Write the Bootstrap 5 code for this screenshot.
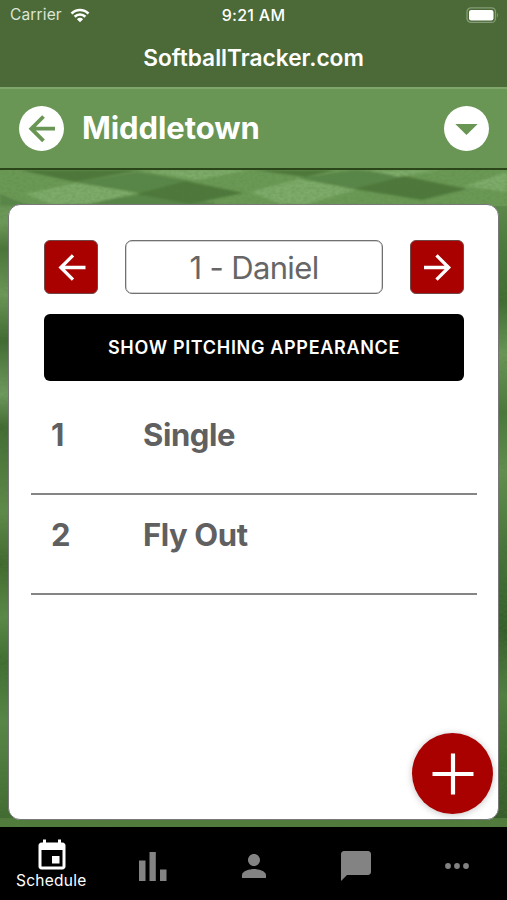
<!DOCTYPE html>
<html lang="en">
<head>
<meta charset="utf-8">
<meta name="viewport" content="width=device-width, initial-scale=1">
<title>SoftballTracker.com</title>
<link href="https://cdn.jsdelivr.net/npm/bootstrap@5.3.0/dist/css/bootstrap.min.css" rel="stylesheet">
<style>
body{font-family:Inter,"Liberation Sans",sans-serif;background:#000;color:#606060}
.phone{height:900px;width:100%}
.top-zone{background:#4b6a38;height:87px}
.status{height:30px;font-size:16px;padding:0 7px 0 10px;line-height:30px;color:#fff}
.status .carrier{color:#dce5d6;font-size:15.5px;letter-spacing:.15px}
.status .clock{font-weight:500;letter-spacing:.3px}
.brand{font-size:22.7px;font-weight:600;line-height:28px;margin-top:14px}
.team-bar{background:#699555;height:83px;border-top:2px solid #7fa76c;border-bottom:2px solid #2b4619;padding:0 18px 0 19px}
.team-name{font-size:31px;font-weight:700;line-height:40px;margin:-2px 0 0 18px;letter-spacing:-.08px}
.round{width:45px;height:45px;border:0;border-radius:50%;background:#fff}
.field{padding:34px 8px 7px}
.grass{position:absolute;inset:0;width:100%;height:100%}
.sheet{border:1px solid #777;border-radius:12px;padding:34px 21px 0 22px}
.picker{padding:1px 13px 0}
.step{width:54px;height:54px;background:#a90000;border:1px solid #704848;border-radius:6px}
.player{width:258px;height:54px;border:1px solid #707070;border-radius:7px;box-shadow:inset 0 0 0 .5px #aaa;font-size:31px;line-height:54px;color:#666;letter-spacing:-.65px}
.pitch{height:67px;margin:20px 13px 0;border-radius:6px;background:#000;color:#fff;font-size:18px;font-weight:600;letter-spacing:.68px}
.play{height:100px;border-bottom:2px solid #858585;padding:20px 20px 0;font-size:31px;font-weight:700;line-height:40px;color:#606060;letter-spacing:-.4px}
.play-no{width:92px}
.plays{margin-top:14px}
.fab{position:absolute;right:14px;top:563px;width:81px;height:81px;border:0;border-radius:50%;background:#a90000;box-shadow:0 1px 7px rgba(0,0,0,.24)}
.tabs{height:73px;background:#000;color:#808080}
.tab-item{width:20%;color:#838383;padding:5px 0 0 2px}
.tab-item.on{color:#fff;font-size:15.5px;line-height:20px;letter-spacing:.25px;padding-left:1px}
.tab-item.on svg{margin-top:6px;margin-bottom:-3px;margin-left:1px}
</style>
</head>
<body>
<div class="phone d-flex flex-column overflow-hidden">
  <header class="top-zone text-white">
    <div class="status d-flex justify-content-between align-items-center position-relative">
      <div class="d-flex align-items-center gap-2"><span class="carrier">Carrier</span>
        <svg width="20" height="15" viewBox="0 0 22 16" fill="none" stroke="#fff" stroke-width="2.9"><path d="M1.7 5.9a13 13 0 0 1 18.6 0M5.1 9.4a8.3 8.3 0 0 1 11.8 0"/><path d="M11 15.5 7.6 12a4.800 4.800 0 0 1 6.800 0z" fill="#fff" stroke="none"/></svg>
      </div>
      <span class="clock position-absolute start-50 translate-middle-x">9:21 AM</span>
      <svg width="34" height="17" viewBox="0 0 34 17"><rect x="1" y=".9" width="28.500" height="14.500" rx="4" fill="none" stroke="#869c77" stroke-width="1.300"/><rect x="3" y="2.900" width="24.500" height="10.500" rx="2.200" fill="#fff"/><path d="M31.200 6q1.900 2.200 0 4.400z" fill="#869c77"/></svg>
    </div>
    <div class="brand text-center">SoftballTracker.com</div>
  </header>
  <nav class="team-bar d-flex align-items-center text-white">
    <button class="round p-0 d-flex align-items-center justify-content-center" aria-label="Back"><svg width="45" height="45" viewBox="0 0 45 45" fill="none" stroke="#699555" stroke-width="3.800"><path d="M36 22.700H12M24.500 10.500 12.300 22.700l12.200 12.200"/></svg></button>
    <span class="team-name">Middletown</span>
    <button class="round p-0 ms-auto d-flex align-items-center justify-content-center" aria-label="Menu"><svg width="45" height="45" viewBox="0 0 45 45" fill="#699555"><path d="M11.300 18h22.400L22.500 29z"/></svg></button>
  </nav>
  <main class="field flex-grow-1 position-relative d-flex flex-column">
    <svg class="grass" viewBox="0 0 507 657" preserveAspectRatio="none">
      <defs>
        <filter id="soft"><feGaussianBlur stdDeviation="1"/></filter>
        <filter id="grain" x="0" y="0" width="100%" height="100%"><feTurbulence type="fractalNoise" baseFrequency=".25 .4" numOctaves="2" seed="4"/><feColorMatrix values="0 0 0 0 .1  0 0 0 0 .2  0 0 0 0 .05  .5 0 0 0 -.17"/></filter>
        <linearGradient id="left" x2="0" y2="1"><stop offset="0" stop-color="#5f8c4c"/><stop offset=".08" stop-color="#6d9a5a"/><stop offset=".12" stop-color="#4a753a"/><stop offset=".19" stop-color="#6c9859"/><stop offset=".26" stop-color="#3f6a31"/><stop offset=".34" stop-color="#6f9b60"/><stop offset=".39" stop-color="#416b32"/><stop offset=".52" stop-color="#5e8b4c"/><stop offset=".6" stop-color="#41692f"/><stop offset=".68" stop-color="#5a8a48"/><stop offset=".75" stop-color="#3f6d31"/><stop offset=".84" stop-color="#588749"/><stop offset="1" stop-color="#3d672e"/></linearGradient>
        <linearGradient id="right" x2="0" y2="1"><stop offset="0" stop-color="#6a9758"/><stop offset=".12" stop-color="#4a783c"/><stop offset=".2" stop-color="#3f6c32"/><stop offset=".28" stop-color="#6a9658"/><stop offset=".37" stop-color="#4a773b"/><stop offset=".46" stop-color="#618f4f"/><stop offset=".58" stop-color="#46723a"/><stop offset=".7" stop-color="#335d2a"/><stop offset=".8" stop-color="#537f43"/><stop offset=".9" stop-color="#3d692f"/><stop offset="1" stop-color="#34592a"/></linearGradient>
      </defs>
      <rect width="254" height="657" fill="url(#left)"/>
      <rect x="253" width="254" height="657" fill="url(#right)"/>
      <rect y="648" width="507" height="9" fill="#507b3d"/>
      <rect width="507" height="36" fill="#6a9955"/>
      <g filter="url(#soft)">
        <path fill="#598648" d="M76 12l62-10 50 9-48 12zM300 8l55-8 50 6-50 13zM0 24l30 12H0zM75 34l70-10 70 9v3H75z"/>
        <path fill="#4d783b" d="M20 0h120L75 12zM136 24l50-13 58 12-54 11zM255 0h80l-30 7zM354 19l50-13 63 13-45 11z"/>
        <path fill="#7dab69" d="M25 24l50-11 62 10-48 11H50zM140 0h110l-53 10zM250 22l49-13 57 11-50 14h-25zM370 0h70l-42 7zM464 16l43-14v20z"/>
      </g>
      <rect width="507" height="657" filter="url(#grain)"/>
    </svg>
    <section class="sheet bg-white flex-grow-1 position-relative">
      <div class="picker d-flex justify-content-between">
        <button class="step p-0 d-flex align-items-center justify-content-center" aria-label="Previous"><svg width="32" height="32" viewBox="0 0 32 32" fill="none" stroke="#fff" stroke-width="3.300"><path d="M30.500 16.500H5.500M18 4.300 5.800 16.500 18 28.700"/></svg></button>
        <div class="player text-center">1 - Daniel</div>
        <button class="step p-0 d-flex align-items-center justify-content-center" aria-label="Next"><svg width="32" height="32" viewBox="0 0 32 32" fill="none" stroke="#fff" stroke-width="3.300"><path d="M3 16.500h25M15.500 4.300 27.700 16.500 15.500 28.700"/></svg></button>
      </div>
      <div class="d-grid"><button class="pitch border-0 p-0">SHOW PITCHING APPEARANCE</button></div>
      <div class="plays">
        <div class="play d-flex"><span class="play-no">1</span><span>Single</span></div>
        <div class="play d-flex"><span class="play-no">2</span><span>Fly Out</span></div>
      </div>
    </section>
    <button class="fab p-0 d-flex align-items-center justify-content-center" aria-label="Add"><svg width="42" height="42" viewBox="0 0 42 42" stroke="#fff" stroke-width="4.200"><path d="M21 .5v41M.5 21h41"/></svg></button>
  </main>
  <footer class="tabs d-flex">
    <div class="tab-item on d-flex flex-column align-items-center"><svg width="36" height="36" viewBox="0 0 24 24" fill="currentColor"><path d="M17 12h-5v5h5v-5zM16 1v2H8V1H6v2H5c-1.110 0-2 .9-2 2v14c0 1.100.89 2 2 2h14c1.100 0 2-.9 2-2V5c0-1.100-.9-2-2-2h-1V1h-2zm3 18H5V8h14v11z"/></svg><span>Schedule</span></div>
    <div class="tab-item d-flex justify-content-center align-items-center"><svg width="28" height="31" viewBox="0 0 28 31" fill="currentColor"><path d="M0 9.500h6.500V30H0zM10.500 1h6.300v29h-6.300zM21 18.500h6.500V30H21z"/></svg></div>
    <div class="tab-item d-flex justify-content-center align-items-center"><svg width="36" height="36" viewBox="0 0 24 24" fill="currentColor"><path d="M12 12c2.210 0 4-1.790 4-4s-1.790-4-4-4-4 1.790-4 4 1.790 4 4 4zm0 2c-2.670 0-8 1.340-8 4v2h16v-2c0-2.660-5.330-4-8-4z"/></svg></div>
    <div class="tab-item d-flex justify-content-center align-items-center"><svg width="36" height="36" viewBox="0 0 24 24" fill="currentColor"><path d="M20 2H4c-1.100 0-1.990.9-1.990 2L2 22l4-4h14c1.100 0 2-.9 2-2V4c0-1.100-.9-2-2-2z"/></svg></div>
    <div class="tab-item d-flex justify-content-center align-items-center"><svg width="24" height="8" viewBox="0 0 24 8" fill="currentColor"><circle cx="3" cy="4" r="2.900"/><circle cx="12" cy="4" r="2.900"/><circle cx="21" cy="4" r="2.900"/></svg></div>
  </footer>
</div>
<script src="https://cdn.jsdelivr.net/npm/bootstrap@5.3.0/dist/js/bootstrap.bundle.min.js"></script>
</body>
</html>
